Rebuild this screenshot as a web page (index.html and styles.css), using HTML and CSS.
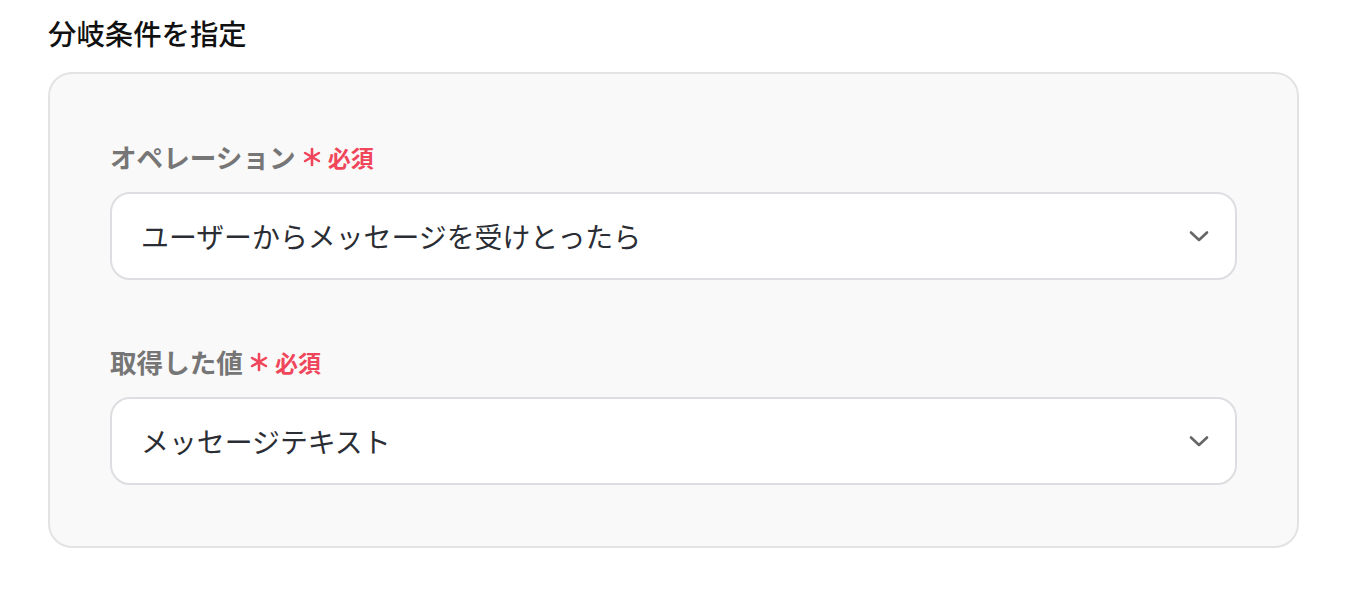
FILE: index.html
```html
<!DOCTYPE html>
<html lang="ja">
<head>
<meta charset="utf-8">
<link rel="stylesheet" href="styles.css">
</head>
<body>
<div class="page">
  <h2 class="title">分岐条件を指定</h2>
  <div class="card">
    <div class="field">
      <div class="label">オペレーション<span class="req"><svg class="ast" viewBox="0 0 20 20" width="20" height="20"><g stroke="currentColor" stroke-width="2.6" stroke-linecap="round"><line x1="10" y1="2" x2="10" y2="18"/><line x1="3.1" y1="6" x2="16.9" y2="14"/><line x1="3.1" y1="14" x2="16.9" y2="6"/></g></svg>必須</span></div>
      <div class="select"><span class="value">ユーザーからメッセージを受けとったら</span><svg class="chev" viewBox="0 0 24 24" width="24" height="24"><path d="M4 8.5l8 7.5 8-7.5" fill="none" stroke="currentColor" stroke-width="2.6" stroke-linecap="round" stroke-linejoin="round"/></svg></div>
    </div>
    <div class="field">
      <div class="label">取得した値<span class="req"><svg class="ast" viewBox="0 0 20 20" width="20" height="20"><g stroke="currentColor" stroke-width="2.6" stroke-linecap="round"><line x1="10" y1="2" x2="10" y2="18"/><line x1="3.1" y1="6" x2="16.9" y2="14"/><line x1="3.1" y1="14" x2="16.9" y2="6"/></g></svg>必須</span></div>
      <div class="select"><span class="value">メッセージテキスト</span><svg class="chev" viewBox="0 0 24 24" width="24" height="24"><path d="M4 8.5l8 7.5 8-7.5" fill="none" stroke="currentColor" stroke-width="2.6" stroke-linecap="round" stroke-linejoin="round"/></svg></div>
    </div>
  </div>
</div>
</body>
</html>
```
FILE: styles.css
```css
* { box-sizing: border-box; }
html, body { margin: 0; padding: 0; background: #ffffff; }
body { font-family: "Noto Sans CJK JP", "Noto Sans", sans-serif; }
.page { padding: 13px 61px 0 48px; }
.title {
  margin: 0 0 19px 0;
  font-size: 28.4px;
  line-height: 40px;
  font-weight: 500;
  color: #111;
}
.card {
  width: 1251px;
  border: 2px solid #e3e3e3;
  border-radius: 24px;
  background: #f9f9f9;
  padding: 65px 60px 61px 60px;
  display: flex;
  flex-direction: column;
  gap: 64px;
}
.field { display: flex; flex-direction: column; gap: 17px; }
.label {
  display: flex;
  align-items: center;
  font-size: 26.6px;
  line-height: 36px;
  font-weight: 700;
  color: #767676;
}
.req {
  display: flex;
  align-items: center;
  margin-left: 6px;
  color: #f0465b;
  font-size: 23px;
  font-weight: 700;
}
.ast { margin-right: 6px; }
.select {
  height: 88px;
  border: 2px solid #dedee2;
  border-radius: 20px;
  background: #ffffff;
  display: flex;
  align-items: center;
  justify-content: space-between;
  padding: 0 24px 0 29px;
}
.value {
  font-size: 27.9px;
  color: #2a2d33;
  font-weight: 400;
}
.chev { color: #666; }
```
